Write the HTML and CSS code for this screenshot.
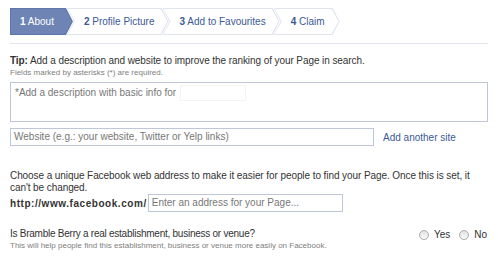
FILE: index.html
```html
<!DOCTYPE html>
<html lang="en">
<head>
    <meta charset="UTF-8">
    <title>Create a Page</title>
    <link rel="stylesheet" href="styles.css">
</head>
<body>

    <!-- Steps -->
    <div class="steps">
        <div class="step active"><span class="step-fill"><span><b>1</b> About</span></span></div>
        <div class="step"><span class="step-fill"><span><b>2</b> Profile Picture</span></span></div>
        <div class="step"><span class="step-fill"><span><b>3</b> Add to Favourites</span></span></div>
        <div class="step"><span class="step-fill"><span><b>4</b> Claim</span></span></div>
    </div>

    <div class="section">
        <div class="tip"><b>Tip:</b> Add a description and website to improve the ranking of your Page in search.</div>
        <div class="note">Fields marked by asterisks (*) are required.</div>

        <div class="textarea">
            <span class="placeholder">*Add a description with basic info for</span>
            <span class="name-box"></span>
        </div>

        <div class="site-row">
            <div class="field site-field"><span class="placeholder">Website (e.g.: your website, Twitter or Yelp links)</span></div>
            <a class="link" href="#">Add another site</a>
        </div>
    </div>

    <div class="section address">
        <div class="text">Choose a unique Facebook web address to make it easier for people to find your Page. Once this is set, it can't be changed.</div>
        <div class="address-row">
            <span class="prefix">http://www.facebook.com/</span>
            <div class="field address-field"><span class="placeholder">Enter an address for your Page...</span></div>
        </div>
    </div>

    <div class="section venue">
        <div class="venue-text">
            <div class="text question">Is Bramble Berry a real establishment, business or venue?</div>
            <div class="note">This will help people find this establishment, business or venue more easily on Facebook.</div>
        </div>
        <div class="choices">
            <span class="radio"></span><span class="choice">Yes</span>
            <span class="radio"></span><span class="choice">No</span>
        </div>
    </div>

</body>
</html>
```

FILE: styles.css
```css
body {
    font-family: "Liberation Sans", Arial, sans-serif;
    font-size: 10px;
    margin: 0;
    padding: 8px 10px 0 10px;
    color: #333;
    background-color: #fff;
}

.steps {
    display: flex;
    height: 27px;
    padding-bottom: 8px;
    border-bottom: 1px solid #e2e5ec;
}

.step {
    display: flex;
    padding: 1px;
    margin-left: -6px;
    background-color: #dfe3ec;
    clip-path: polygon(0 0, calc(100% - 7px) 0, 100% 50%, calc(100% - 7px) 100%, 0 100%, 7px 50%);
}

.step-fill {
    display: flex;
    align-items: center;
    padding: 0 13px 0 16px;
    font-size: 10px;
    color: #3b5998;
    background-color: #fff;
    white-space: nowrap;
    clip-path: polygon(0 0, calc(100% - 7px) 0, 100% 50%, calc(100% - 7px) 100%, 0 100%, 7px 50%);
}

.step:first-child {
    margin-left: 0;
    clip-path: polygon(0 0, calc(100% - 7px) 0, 100% 50%, calc(100% - 7px) 100%, 0 100%);
}

.step:first-child .step-fill {
    padding: 0 18px 0 9px;
    clip-path: polygon(0 0, calc(100% - 7px) 0, 100% 50%, calc(100% - 7px) 100%, 0 100%);
}

.step:last-child .step-fill {
    padding-right: 14px;
}

.step.active {
    background-color: #5c75aa;
}

.step.active .step-fill {
    color: #fff;
    background-color: #6d84b4;
}

.section {
    padding-top: 10px;
}

.tip {
    font-size: 10px;
    line-height: 13px;
    letter-spacing: -0.08px;
    color: #333;
}

.note {
    font-size: 8px;
    line-height: 11px;
    color: #808080;
}

.textarea {
    display: flex;
    align-items: flex-start;
    height: 38px;
    margin-top: 4px;
    padding: 0 4px;
    border: 1px solid #bdc7d8;
}

.placeholder {
    color: #777;
    font-size: 10px;
    line-height: 16px;
    white-space: nowrap;
}

.textarea .placeholder {
    padding-top: 2px;
}

.name-box {
    width: 64px;
    height: 14px;
    margin: 2px 0 0 4px;
    border: 1px solid #f4f4f4;
}

.site-row {
    display: flex;
    align-items: center;
    margin-top: 6px;
}

.field {
    height: 16px;
    padding: 0 3px;
    border: 1px solid #bdc7d8;
}

.site-field {
    width: 356px;
}

.link {
    margin-left: 9px;
    font-size: 10px;
    color: #3b5998;
    text-decoration: none;
}

.address {
    padding-top: 24px;
}

.text {
    font-size: 10px;
    line-height: 12px;
    letter-spacing: -0.08px;
}

.address-row {
    display: flex;
    align-items: center;
}

.prefix {
    font-size: 10px;
    font-weight: bold;
    letter-spacing: 0.55px;
    color: #333;
    margin-right: 1px;
}

.address-field {
    width: 187px;
}

.venue {
    display: flex;
    justify-content: space-between;
    align-items: flex-start;
    padding-top: 16px;
}

.question {
    letter-spacing: -0.25px;
}

.choices {
    display: flex;
    align-items: center;
    padding-top: 1px;
    font-size: 10px;
}

.radio {
    width: 8px;
    height: 8px;
    border: 1px solid #aaa;
    border-radius: 50%;
    background: linear-gradient(#e2e2e2, #fafafa);
    margin-right: 5px;
}

.choice {
    margin-right: 9px;
}

.choice:last-child {
    margin-right: 1px;
}
```
